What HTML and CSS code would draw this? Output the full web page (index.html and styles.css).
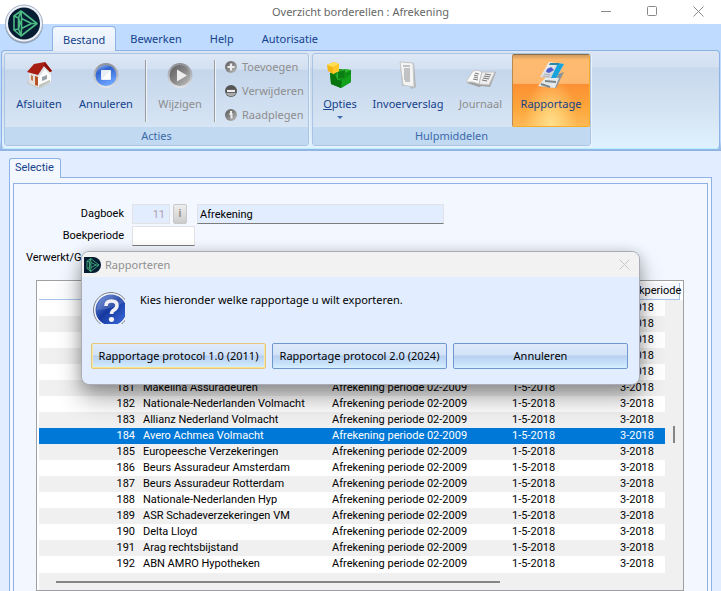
FILE: index.html
```html
<!DOCTYPE html>
<html lang="nl">
<head>
<meta charset="utf-8">
<title>Overzicht borderellen : Afrekening</title>
<link rel="stylesheet" href="styles.css">
</head>
<body>
<svg class="defs" aria-hidden="true">
  <defs>
    <linearGradient id="grey" x1="0" y1="0" x2="1" y2="1"><stop offset="0" stop-color="#5c5c5c"/><stop offset=".5" stop-color="#868686"/><stop offset="1" stop-color="#c4c4c4"/></linearGradient>
    <linearGradient id="blue" x1="0" y1="0" x2="0.4" y2="1"><stop offset="0" stop-color="#a9c6f7"/><stop offset=".35" stop-color="#2f62cf"/><stop offset="1" stop-color="#6aa2ff"/></linearGradient>
    <linearGradient id="ring" x1="0" y1="0" x2="0" y2="1"><stop offset="0" stop-color="#8c8f94"/><stop offset="1" stop-color="#e4e6ea"/></linearGradient>
    <linearGradient id="help" x1="0" y1="0" x2="1" y2="1"><stop offset="0" stop-color="#6e93dc"/><stop offset=".45" stop-color="#1538a0"/><stop offset="1" stop-color="#3f6fe0"/></linearGradient>
    <linearGradient id="paper" x1="0" y1="0" x2="1" y2="1"><stop offset="0" stop-color="#ffffff"/><stop offset="1" stop-color="#b9bcc0"/></linearGradient>
    <g id="mark" fill="none" stroke="#4dba84" stroke-width="1.6" stroke-linejoin="round">
      <path d="M9 1 2 6v14l7 6 16-12.500L9 1Z"/><path d="M9 1 6.500 8 8 13l-1.500 6L9 26M2 6l4.500 2M2 20l4.500-1M6.500 8v11M9.500 8.500v10l10-5-10-5ZM9 1l.5 7.500M9 26l.5-7.500M19.500 13.500H25"/>
    </g>
  </defs>
</svg>

<header class="titlebar">
  <h1>Overzicht borderellen : Afrekening</h1>
  <div class="window-buttons">
    <button type="button" aria-label="Minimaliseren"><svg width="11" height="11"><path d="M0 5.500h10"/></svg></button>
    <button type="button" aria-label="Maximaliseren"><svg width="11" height="11"><rect x=".5" y=".5" width="9" height="9" rx="1"/></svg></button>
    <button type="button" aria-label="Sluiten"><svg width="11" height="11"><path d="M.5.5l10 10m0-10-10 10"/></svg></button>
  </div>
  <button type="button" class="app-button" aria-label="Menu">
    <svg width="40" height="40" viewBox="0 0 40 40">
      <circle cx="20" cy="20.500" r="19" fill="#8d99ac"/><circle cx="20" cy="19.500" r="18.500" fill="#eef2f8" stroke="#a5b3c8"/><circle cx="20" cy="19.500" r="16" fill="#061c33"/>
      <use href="#mark" transform="translate(8 6)"/>
    </svg>
  </button>
</header>

<nav class="menu">
  <a href="#" class="active">Bestand</a><a href="#">Bewerken</a><a href="#">Help</a><a href="#">Autorisatie</a>
</nav>

<div class="ribbon-band">
<div class="ribbon">
  <section class="group">
    <div class="tools">
      <button type="button" class="tool w-afsluiten">
        <svg width="28" height="28" viewBox="0 0 28 28">
          <path d="m1 22 13 6 13-7-5-4H6Z" fill="#c9ccce"/><path d="m4 11 9 3v12l-9-4Z" fill="#e3e0dd"/><path d="m13 14 7-8 6 6v9l-13 5Z" fill="#fafafa"/><path d="m13 14 7-8 6 6v2l-6-6-7 9Z" fill="#ddd"/>
          <path d="M9 3 20 1l7 9-2 1-6-6-6 9-11-3Z" fill="#a81d12"/><path d="m20 1 7 9-2 1-6-6Z" fill="#8a130b"/><path d="M10 15v9l3 1v-9Z" fill="#b65327"/><path d="M6 14v5l2 1v-5Z" fill="#c37a4b"/><path d="m17 16 5-2v4l-5 2Z" fill="#98a0a8"/><path d="m14 24 11-5v2l-11 5Z" fill="#b9bfb2"/>
        </svg><span>Afsluiten</span></button>
      <button type="button" class="tool w-annuleren">
        <svg width="28" height="28" viewBox="0 0 28 28"><circle cx="14" cy="14.500" r="12.500" fill="url(#ring)"/><circle cx="14" cy="14.500" r="10.500" fill="url(#blue)"/><rect x="9" y="9" width="10" height="10" rx="1" fill="#e9edf5"/><path d="M10 18h8v-8Z" fill="#fff"/></svg><span>Annuleren</span></button>
      <i class="sep"></i>
      <button type="button" class="tool w-wijzigen" disabled>
        <svg width="28" height="28" viewBox="0 0 28 28"><circle cx="14" cy="14.500" r="12.500" fill="url(#ring)"/><circle cx="14" cy="14.500" r="10.500" fill="url(#grey)"/><path d="M11 8.500v12l10-6Z" fill="#eee"/></svg><span>Wijzigen</span></button>
      <i class="sep"></i>
      <div class="small-tools">
        <button type="button" disabled><svg width="14" height="14"><circle cx="7" cy="7" r="6" fill="url(#grey)"/><path d="M7 3.500v7M3.500 7h7" stroke="#eee" stroke-width="2.200"/></svg>Toevoegen</button>
        <button type="button" disabled><svg width="14" height="14"><circle cx="7" cy="7" r="6" fill="#555"/><path d="M2 9a5.500 5.500 0 0 0 10 0Z" fill="#aaa"/><path d="M3 7h8" stroke="#eee" stroke-width="2.200"/></svg>Verwijderen</button>
        <button type="button" disabled><svg width="14" height="14"><circle cx="7" cy="7" r="6" fill="url(#grey)"/><path d="M5.500 6H7.500v4.500M7 3v2" fill="none" stroke="#eee" stroke-width="2"/></svg>Raadplegen</button>
      </div>
    </div>
    <h2>Acties</h2>
  </section>
  <section class="group">
    <div class="tools">
      <button type="button" class="tool w-opties">
        <svg width="28" height="28" viewBox="0 0 28 28"><path d="m4 12 9-4 12 1v12l-10 6-10-4Z" fill="#0c8d14"/><path d="m4 12 6 3 1 4 5 1-1 7-10-4Z" fill="#07740d"/><path d="m12 10 8-2 5 1-6 3-1 5-6 2-2-4Z" fill="#2eb534"/><path d="m12 11 7-2v3l-1 5-6 1Z" fill="#0a7e12"/><path d="m16 19 9-6v8l-10 6Z" fill="#13a01b"/><path d="m1 4 7-3 5 2v7l-6 3-5-3Z" fill="#f2b713"/><path d="m1 4 7-3 5 2-6 3Z" fill="#ffe052"/><path d="m7 6 6-3v7l-6 3Z" fill="#ffc92b"/></svg><span><u>O</u>pties</span><b class="arrow"></b></button>
      <button type="button" class="tool w-verslag">
        <svg width="28" height="28" viewBox="0 0 28 28"><path d="m6 1 14 1 2 24-4 2-3-3-7 0Z" fill="#b4b6b8"/><path d="m6 1 13 1 1 24-11-2Z" fill="#f4f4f4" stroke="#c6c8ca"/><path d="M9 5h7M10 8h6m-6 2h6m-6 2h6m-6 2h6m-6 2h6m-6 2h6m-5 2h5" stroke="#8e9092"/></svg><span>Invoerverslag</span></button>
      <button type="button" class="tool w-journaal" disabled>
        <svg width="32" height="28" viewBox="0 0 32 28"><path d="m2 22 7-12 7 2 15-1-6 15-8-1-3 1Z" fill="#a0a0a0"/><path d="m1 21 7-11q5-2 9 1l-3 12q-6-3-13-2Z" fill="#fafafa" stroke="#c9c9c9"/><path d="m17 11 13 0-6 13-10-1Z" fill="#eee" stroke="#c2c2c2"/><path d="m10 12 4 1m-5 1 4 1m-4 1 4 1m-5 1 5 1M20 13l6 1m-7 1 6 1m-7 1 6 1m-7 1 5 1" stroke="#777"/></svg><span>Journaal</span></button>
      <button type="button" class="tool w-rapportage checked">
        <svg width="28" height="28" viewBox="0 0 28 28"><path d="m10 17 17-6-8 16-17-2Z" fill="#8a9398"/><path d="m1 25 8-9 13 1-4 10Z" fill="#e5e9eb"/><path d="m4 23 9 3m-5-6 11 1" stroke="#7c878c" stroke-width="2"/><path d="m12 1 15 2-8 14-16-1Z" fill="url(#paper)"/><path d="m21 2 6 1-8 14-5 0Z" fill="#17a4dc"/><path d="m13 2 9 0-1 2-9 0Z" fill="#2b87a5"/><path d="m10 8 4-2 3 3-5 3-3-1Z" fill="#4a5bd0"/><path d="m7 13 6 1m-7 1 6 1" stroke="#a9b0bb"/></svg><span>Rapportage</span></button>
    </div>
    <h2>Hulpmiddelen</h2>
  </section>
</div>
</div>

<main>
  <div class="tabs"><a href="#" class="tab">Selectie</a></div>
  <div class="panel"><div class="panel-inner">
    <form class="fields">
      <label for="dagboek">Dagboek</label>
      <div class="line"><input id="dagboek" class="code" value="11" disabled><button type="button" class="info" aria-label="Informatie">i</button><input class="name" value="Afrekening" readonly aria-label="Naam dagboek"></div>
      <label for="periode">Boekperiode</label>
      <div class="line"><input id="periode" class="period"></div>
      <label for="verwerkt" class="start">Verwerkt/G</label>
      <div class="line"><input id="verwerkt" class="check" type="checkbox" checked></div>
    </form>
    <div class="grid">
      <table>
        <colgroup><col class="c-nr"><col class="c-name"><col class="c-desc"><col class="c-date"><col></colgroup>
        <thead><tr><th></th><th></th><th></th><th></th><th>Boekperiode</th></tr></thead>
        <tbody>
          <tr><td></td><td></td><td></td><td></td><td>3-2018</td></tr>
          <tr><td></td><td></td><td></td><td></td><td>3-2018</td></tr>
          <tr><td></td><td></td><td></td><td></td><td>3-2018</td></tr>
          <tr><td></td><td></td><td></td><td></td><td>3-2018</td></tr>
          <tr><td></td><td></td><td></td><td></td><td>3-2018</td></tr>
          <tr><td>181</td><td>Makelina Assuradeuren</td><td>Afrekening periode 02-2009</td><td>1-5-2018</td><td>3-2018</td></tr>
          <tr><td>182</td><td>Nationale-Nederlanden Volmacht</td><td>Afrekening periode 02-2009</td><td>1-5-2018</td><td>3-2018</td></tr>
          <tr><td>183</td><td>Allianz Nederland Volmacht</td><td>Afrekening periode 02-2009</td><td>1-5-2018</td><td>3-2018</td></tr>
          <tr class="selected"><td>184</td><td>Avero Achmea Volmacht</td><td>Afrekening periode 02-2009</td><td>1-5-2018</td><td>3-2018</td></tr>
          <tr><td>185</td><td>Europeesche Verzekeringen</td><td>Afrekening periode 02-2009</td><td>1-5-2018</td><td>3-2018</td></tr>
          <tr><td>186</td><td>Beurs Assuradeur Amsterdam</td><td>Afrekening periode 02-2009</td><td>1-5-2018</td><td>3-2018</td></tr>
          <tr><td>187</td><td>Beurs Assuradeur Rotterdam</td><td>Afrekening periode 02-2009</td><td>1-5-2018</td><td>3-2018</td></tr>
          <tr><td>188</td><td>Nationale-Nederlanden Hyp</td><td>Afrekening periode 02-2009</td><td>1-5-2018</td><td>3-2018</td></tr>
          <tr><td>189</td><td>ASR Schadeverzekeringen VM</td><td>Afrekening periode 02-2009</td><td>1-5-2018</td><td>3-2018</td></tr>
          <tr><td>190</td><td>Delta Lloyd</td><td>Afrekening periode 02-2009</td><td>1-5-2018</td><td>3-2018</td></tr>
          <tr><td>191</td><td>Arag rechtsbijstand</td><td>Afrekening periode 02-2009</td><td>1-5-2018</td><td>3-2018</td></tr>
          <tr><td>192</td><td>ABN AMRO Hypotheken</td><td>Afrekening periode 02-2009</td><td>1-5-2018</td><td>3-2018</td></tr>
        </tbody>
      </table>
      <div class="vscroll"><i></i></div>
      <div class="hscroll"><i></i></div>
    </div>
  </div></div>
</main>

<div class="dialog" role="dialog" aria-labelledby="dialog-title">
  <header>
    <svg width="17" height="16" viewBox="0 0 17 16"><path d="M0 0h9a8 8 0 0 1 0 16H0Z" fill="#061c33"/><use href="#mark" transform="translate(2 1) scale(.52)"/></svg>
    <h2 id="dialog-title">Rapporteren</h2>
    <button type="button" aria-label="Sluiten"><svg width="11" height="11"><path d="M.5.5l10 10m0-10-10 10"/></svg></button>
  </header>
  <div class="message">
    <svg width="32" height="32" viewBox="0 0 32 32"><circle cx="18" cy="18" r="17.500" fill="#f4f6fa" stroke="#777d88"/><circle cx="18" cy="18" r="15.500" fill="url(#help)"/><path d="M4 18a14.500 14.500 0 0 1 27-8q-10 7-27 8Z" fill="#fff" opacity=".15"/><path d="M13 14q0-5 5.500-5t5.500 4.500q0 2.500-3 4.500-2.500 1.500-2.500 4" fill="none" stroke="#f2f2f4" stroke-width="3.600"/><ellipse cx="18.500" cy="27.500" rx="2.600" ry="2.400" fill="#f2f2f4"/></svg>
    <p>Kies hieronder welke rapportage u wilt exporteren.</p>
  </div>
  <div class="actions">
    <button type="button" class="default">Rapportage protocol 1.0 (2011)</button>
    <button type="button">Rapportage protocol 2.0 (2024)</button>
    <button type="button">Annuleren</button>
  </div>
</div>
</body>
</html>
```
FILE: styles.css
```css
* { box-sizing: border-box; }
html { height: 100%; }
body {
  margin: 0;
  height: 100vh;
  overflow: hidden;
  position: relative;
  display: flex;
  flex-direction: column;
  background: #e2edff;
  color: #000;
  font: 11px/16px "Noto Sans", "Open Sans", sans-serif;
}
h1, h2, p { margin: 0; font: inherit; }
button, input { font: inherit; color: inherit; }
button { padding: 0; border: 0; background: none; }
a { color: inherit; text-decoration: none; }
svg { display: block; flex: none; }
.defs { position: absolute; width: 0; height: 0; }

/* Window title */
.titlebar {
  position: relative;
  display: flex;
  align-items: center;
  justify-content: center;
  height: 24px;
  flex: none;
  background: #fff;
  color: #666;
}
.window-buttons { position: absolute; right: 17px; top: 6px; display: flex; gap: 35px; }
.window-buttons svg, .dialog header button svg { fill: none; stroke: #8a8a8a; }
.app-button { position: absolute; left: 4px; top: 4px; z-index: 2; }

/* Menu tabs */
.menu {
  display: flex;
  align-items: flex-end;
  height: 26px;
  flex: none;
  padding-left: 52px;
  background: #bfdbff;
  color: #15428b;
}
.menu a { padding: 6px 14px 4px; height: 25px; }
.menu a.active {
  position: relative;
  z-index: 1;
  padding: 5px 10px;
  margin-bottom: -1px;
  border: 1px solid #8db2e3;
  border-bottom: 0;
  border-radius: 4px 4px 0 0;
  background: linear-gradient(#f4f8fe, #e4edfa);
}

/* Ribbon */
.ribbon-band { flex: none; background: linear-gradient(#bfdbff 90%, #8fb1df); padding: 0 1px 2px; height: 101px; }
.ribbon {
  display: flex;
  gap: 3px;
  height: 99px;
  padding: 2px;
  border: 1px solid #8db2e3;
  border-bottom-color: #b8f0fb;
  border-radius: 4px;
  background: linear-gradient(#dbe6f4 0, #d2e0f1 16px, #c7d8ed 17px, #d4e3f2 60%, #e0f1ff);
}
.group {
  display: flex;
  flex-direction: column;
  height: 93px;
  border: 1px solid #aac4e4;
  border-radius: 3px;
  box-shadow: 1px 1px 0 #eaf3fd;
  background: linear-gradient(#dee8f5 0, #d3e0f1 15px, #c5d6ec 16px, #d7e5f4 75px);
}
.group h2 { height: 18px; line-height: 17px; text-align: center; color: #3e6aaa; background: #c1d9f1; }
.tools { display: flex; flex: 1; color: #15428b; }
.tool { display: flex; flex-direction: column; align-items: center; padding-top: 7px; position: relative; height: 73px; }
.tool span { margin-top: 7px; white-space: nowrap; }
.tool:disabled, .small-tools button:disabled { color: #8d8d8d; }
.w-afsluiten { width: 68px; }
.w-annuleren { width: 66px; }
.w-wijzigen { width: 68px; }
.w-opties { width: 54px; }
.w-verslag { width: 82px; }
.w-journaal { width: 63px; }
.w-rapportage { width: 78px; }
.sep { width: 1px; height: 62px; margin: 6px 0 0 6px; background: #9b9b9b; box-shadow: 1px 0 #eef4fb; }
.sep + .tool { margin-right: -6px; }
.small-tools { display: flex; flex-direction: column; gap: 8px; padding: 5px 6px 0 9px; width: 93px; }
.small-tools button { display: flex; align-items: center; gap: 4px; height: 16px; white-space: nowrap; }
.arrow { position: absolute; bottom: 8px; border: 3px solid transparent; border-top-color: #3e6aaa; border-bottom: 0; }
.checked {
  padding-top: 6px;
  border: 1px solid #f9ad26;
  border-top-color: #8a704a;
  border-left-color: #b98a4d;
  border-radius: 2px;
  background: radial-gradient(ellipse at 50% 100%, #ffe08c 0, transparent 50%), linear-gradient(#d09a5c 0, #fdbb70 5px, #fdb870 40%, #fc8f34 41%, #fda63c 75%, #fdb955);
}

/* Selection panel */
main { flex: 1; display: flex; flex-direction: column; min-height: 0; padding: 7px 9px 0; font-family: "Roboto", sans-serif; }
.tabs { display: flex; }
.tab {
  height: 20px;
  padding: 1px 6px 0 5px;
  border: 1px solid #8db2e3;
  border-bottom: 0;
  border-radius: 3px 3px 0 0;
  margin-bottom: -1px;
  z-index: 1;
  background: #f3f7ff;
  color: #15428b;
}
.panel { flex: 1; padding: 5px 3px 0; border: 1px solid #8db2e3; border-bottom: 0; background: #f3f7ff; }
.panel-inner { height: 100%; padding: 20px 23px 0 22px; border: 1px solid #8db2e3; border-bottom: 0; }
.fields { display: grid; grid-template-columns: 88px 1fr; column-gap: 8px; row-gap: 2px; }
.fields label { height: 20px; line-height: 20px; text-align: right; white-space: nowrap; }
.fields .start { margin-left: -10px; text-align: left; }
.line { display: flex; align-items: center; gap: 3px; }
.line input { height: 20px; margin: 0; padding: 0 2px; border: 1px solid #e2e2e4; border-bottom-color: #7c7c7c; background: #e2edff; outline: 0; }
.line .code { width: 38px; padding-right: 4px; text-align: right; border-bottom-color: #e2e2e4; color: #b0a0ae; }
.line .info { width: 14px; height: 20px; margin-right: 7px; border: 1px solid #c8c8c8; border-radius: 2px; background: linear-gradient(#eee, #ccc); color: #98928a; font-weight: bold; line-height: 18px; }
.line .name { width: 247px; }
.line .period { width: 63px; background: #fff; }
.line .check { width: 13px; height: 15px; accent-color: #0067c0; }
.grid {
  position: relative;
  margin-top: 12px;
  height: 311px;
  padding: 2px 3px 0 2px;
  border: 1px solid #a0a0a4;
  background: #fff;
  overflow: hidden;
}
table { width: 100%; table-layout: fixed; border-collapse: separate; border-spacing: 0; }
.c-nr { width: 100px; }
.c-name { width: 189px; }
.c-desc { width: 180px; }
.c-date { width: 108px; }
th { height: 17px; padding: 0 0 0 4px; font-weight: normal; line-height: 14px; text-align: left; white-space: nowrap; border-bottom: 1px solid #a9c3e8; background: linear-gradient(90deg, #fff, #f3f6fd); }
th:last-child { border-right: 1px solid #a9c3e8; }
td { height: 16px; padding: 0 0 0 4px; line-height: 16px; white-space: nowrap; }
td:first-child { padding: 0 4px 0 0; text-align: right; }
tbody tr:nth-child(even) { background: #f0f0f0; }
tbody .selected { background: #0078d7; color: #fff; }
.vscroll { position: absolute; right: 0; top: 19px; bottom: 0; width: 18px; background: #f0f0f0; }
.vscroll i { position: absolute; left: 8px; top: 126px; width: 2px; height: 17px; background: #858585; }
.hscroll { position: absolute; left: 2px; right: 0; bottom: 0; height: 17px; background: #f0f0f0; }
.hscroll i { display: block; width: 69%; height: 2px; margin: 8px 0 0 17px; background: #858585; }

/* Report dialog */
.dialog {
  position: absolute;
  z-index: 5;
  top: 251px;
  left: 0;
  right: 0;
  margin: 0 auto;
  width: 559px;
  height: 134px;
  border: 1px solid #a9adb3;
  border-radius: 8px;
  background: #e2edff;
  box-shadow: 0 14px 24px rgba(0, 0, 0, .32), 0 2px 14px rgba(0, 0, 0, .2);
  overflow: hidden;
}
.dialog header { display: flex; align-items: center; height: 25px; padding: 0 9px 0 2px; background: #f2f2f2; color: #909090; }
.dialog header h2 { flex: 1; margin-left: 4px; }
.dialog header button svg { stroke: #c8c8c8; }
.message { display: flex; gap: 15px; padding: 15px 11px 0; height: 66px; }
.actions { display: grid; grid-template-columns: repeat(3, 1fr); gap: 6px; padding: 0 11px 0 9px; }
.actions button {
  height: 26px;
  border: 1px solid #6f98cf;
  border-radius: 2px;
  background: linear-gradient(#dfeafa 0, #d3e3f8 45%, #b9d0f0 50%, #c9e4fb 85%, #d8f0ff);
  white-space: nowrap;
}
.actions .default { border-color: #e3c878; box-shadow: inset 0 -1px #fbe58a, inset 1px 0 #f6e6a8, inset -1px 0 #f6e6a8; }
```
